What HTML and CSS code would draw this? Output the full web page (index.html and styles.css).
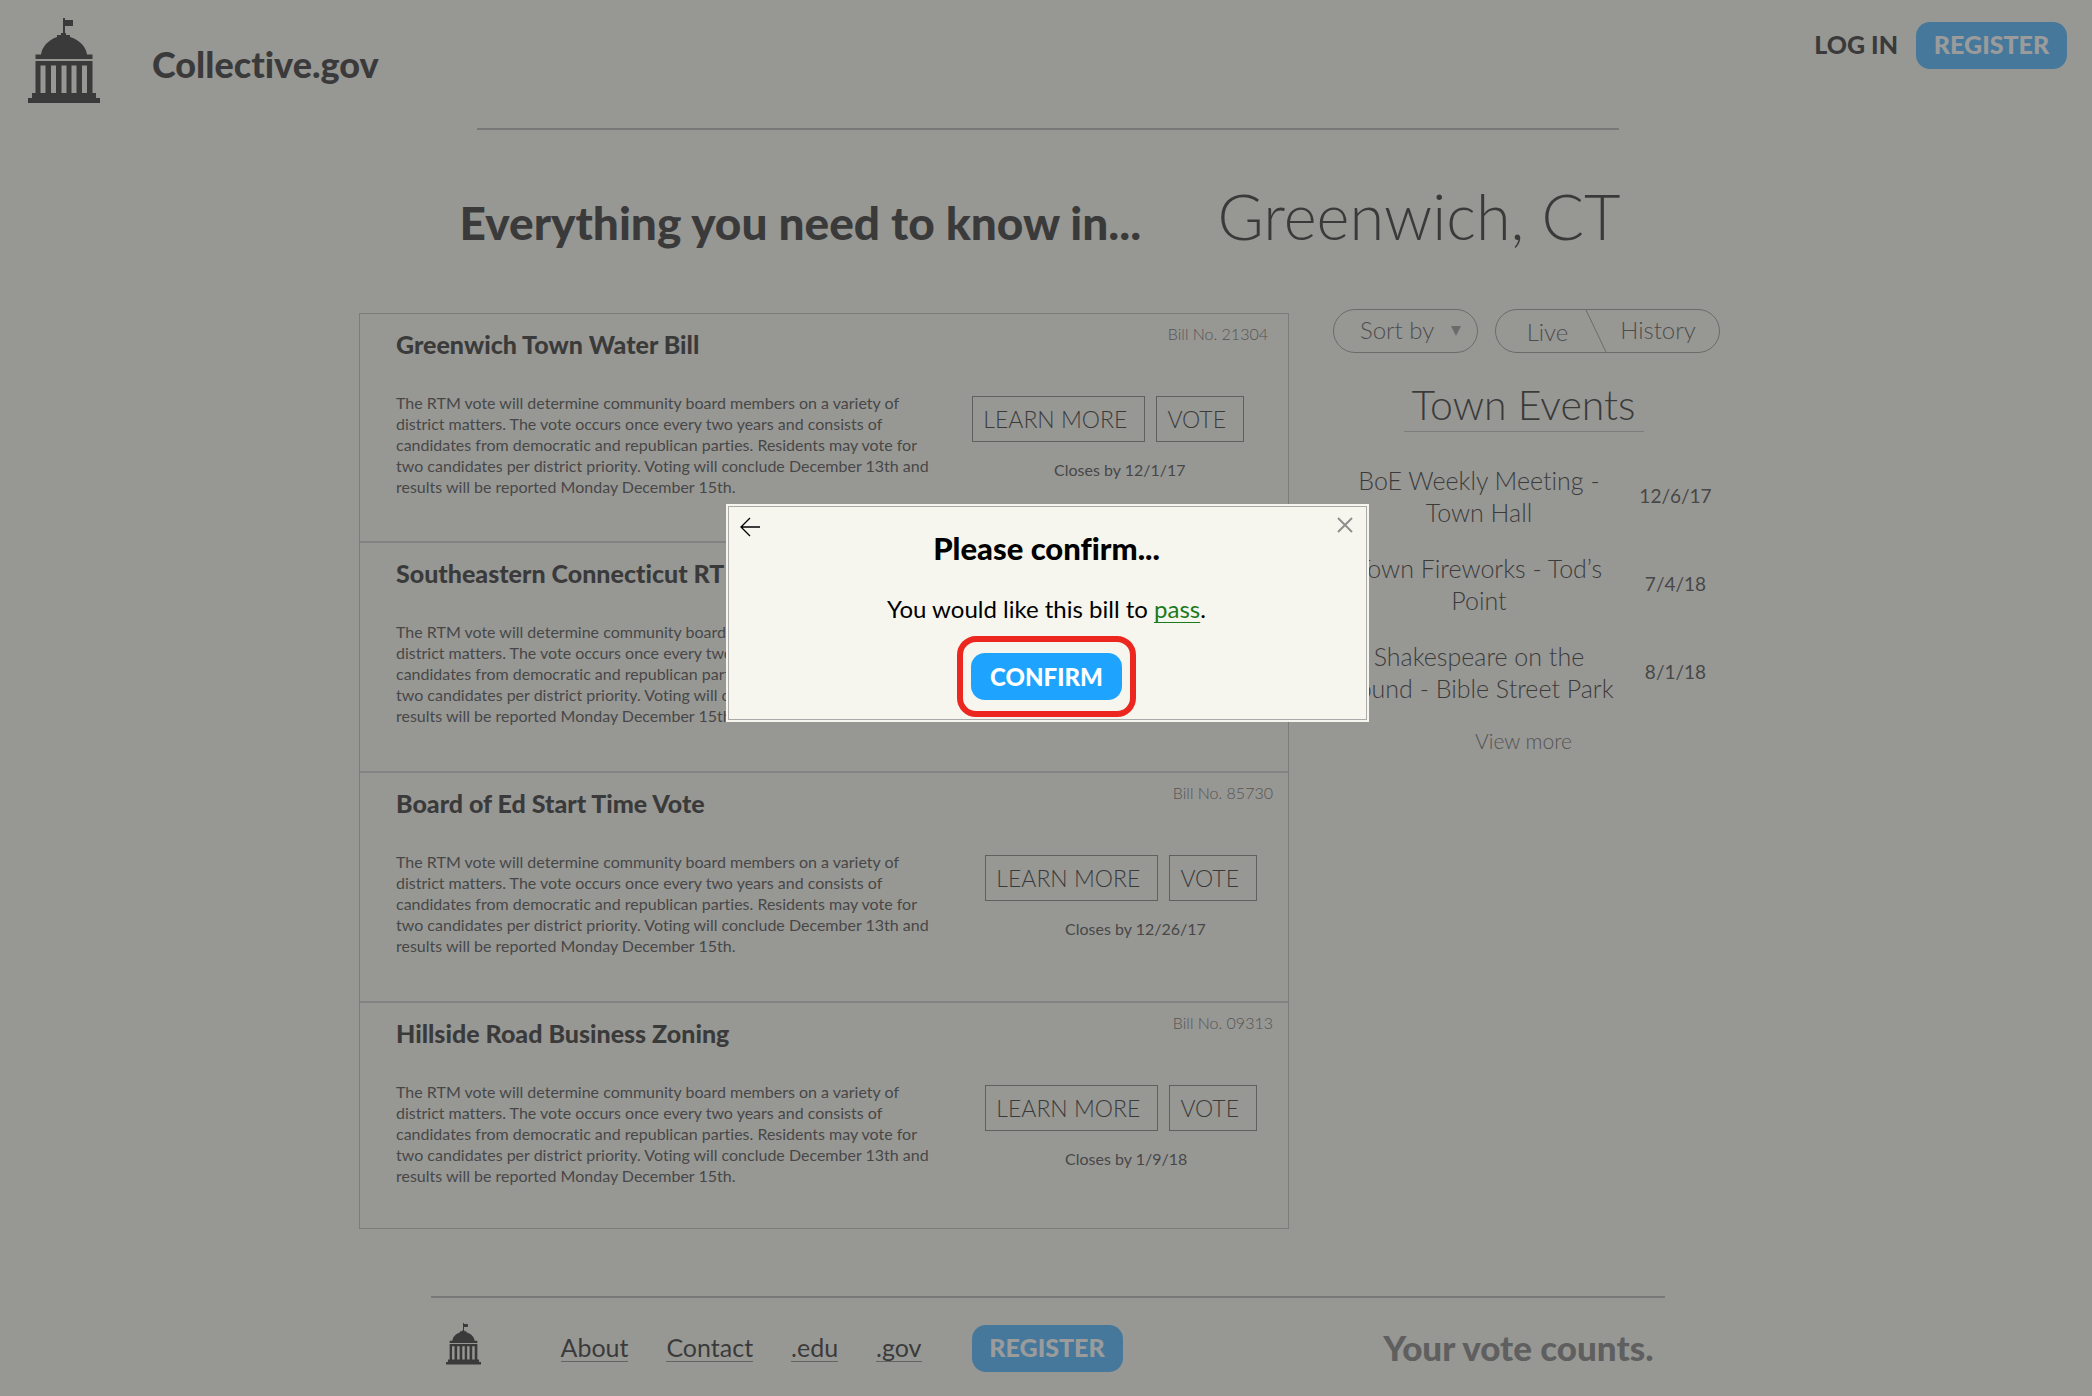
FILE: index.html
```html
<!DOCTYPE html>
<html lang="en">
<head>
<meta charset="utf-8">
<meta name="viewport" content="width=device-width, initial-scale=1">
<title>Collective.gov</title>
<link rel="stylesheet" href="styles.css">
</head>
<body>
<svg class="sprite" width="0" height="0" aria-hidden="true">
  <symbol id="capitol" viewBox="0 0 72 86">
    <path d="M35 0h2v2h8v6h-8v7h1v2h4v2C52 22 58 29 59 36.500h5.500V41h-57v-4.500H13C14 29 20 22 29 19v-2h4v-2h2z"/>
    <path d="M7.500 43h57v32H68v5h4v5H0v-5h4v-5h3.500zM12.500 47.500V75h5V47.500zM23 47.500V75h5V47.500zM33.500 47.500V75h5V47.500zM43.500 47.500V75h5V47.500zM54 47.500V75h5V47.500z" fill-rule="evenodd"/>
  </symbol>
</svg>

<div class="page">
  <header class="top">
    <svg class="top-logo" aria-hidden="true"><use href="#capitol"/></svg>
    <a class="brand" href="#">Collective.gov</a>
    <nav class="account">
      <a class="login" href="#">LOG IN</a>
      <button class="pill-blue" type="button">REGISTER</button>
    </nav>
  </header>
  <hr class="rule rule-top">

  <div class="headline">
    <h1>Everything you need to know in...</h1>
    <p class="place">Greenwich, CT</p>
  </div>

  <main class="content">
    <section class="bills">
      <article class="bill bill-first">
        <div class="bill-text">
          <h2>Greenwich Town Water Bill</h2>
          <p>The RTM vote will determine community board members on a variety of<br>district matters. The vote occurs once every two years and consists of<br>candidates from democratic and republican parties. Residents may vote for<br>two candidates per district priority. Voting will conclude December 13th and<br>results will be reported Monday December 15th.</p>
        </div>
        <div class="bill-side">
          <span class="number">Bill No. 21304</span>
          <div class="actions"><button type="button">LEARN MORE</button><button type="button">VOTE</button></div>
          <span class="closes">Closes by 12/1/17</span>
        </div>
      </article>
      <article class="bill">
        <div class="bill-text">
          <h2>Southeastern Connecticut RTM</h2>
          <p>The RTM vote will determine community board members on a variety of<br>district matters. The vote occurs once every two years and consists of<br>candidates from democratic and republican parties. Residents may vote for<br>two candidates per district priority. Voting will conclude December 13th and<br>results will be reported Monday December 15th.</p>
        </div>
      </article>
      <article class="bill">
        <div class="bill-text">
          <h2>Board of Ed Start Time Vote</h2>
          <p>The RTM vote will determine community board members on a variety of<br>district matters. The vote occurs once every two years and consists of<br>candidates from democratic and republican parties. Residents may vote for<br>two candidates per district priority. Voting will conclude December 13th and<br>results will be reported Monday December 15th.</p>
        </div>
        <div class="bill-side">
          <span class="number">Bill No. 85730</span>
          <div class="actions"><button type="button">LEARN MORE</button><button type="button">VOTE</button></div>
          <span class="closes">Closes by 12/26/17</span>
        </div>
      </article>
      <article class="bill">
        <div class="bill-text">
          <h2>Hillside Road Business Zoning</h2>
          <p>The RTM vote will determine community board members on a variety of<br>district matters. The vote occurs once every two years and consists of<br>candidates from democratic and republican parties. Residents may vote for<br>two candidates per district priority. Voting will conclude December 13th and<br>results will be reported Monday December 15th.</p>
        </div>
        <div class="bill-side">
          <span class="number">Bill No. 09313</span>
          <div class="actions"><button type="button">LEARN MORE</button><button type="button">VOTE</button></div>
          <span class="closes">Closes by 1/9/18</span>
        </div>
      </article>
    </section>

    <aside class="side">
      <div class="filters">
        <div class="sort">
          <select aria-label="Sort by"><option>Sort by</option></select>
          <svg width="10" height="10" viewBox="0 0 10 10" aria-hidden="true"><path d="M0 0h10L5 10z"/></svg>
        </div>
        <div class="toggle">
          <button type="button">Live</button>
          <svg width="22" height="42" viewBox="0 0 22 42" aria-hidden="true"><path d="M1 0l20 42"/></svg>
          <button type="button">History</button>
        </div>
      </div>
      <h2 class="events-title">Town Events</h2>
      <ul class="events">
        <li><span class="event">BoE Weekly Meeting -<br>Town Hall</span><time>12/6/17</time></li>
        <li><span class="event">Town Fireworks - Tod’s<br>Point</span><time>7/4/18</time></li>
        <li><span class="event">Shakespeare on the<br>Sound - Bible Street Park</span><time>8/1/18</time></li>
      </ul>
      <a class="more" href="#">View more</a>
    </aside>
  </main>

  <footer class="bottom">
    <svg class="bottom-logo" aria-hidden="true"><use href="#capitol"/></svg>
    <nav class="links">
      <a href="#">About</a>
      <a href="#">Contact</a>
      <a href="#">.edu</a>
      <a href="#">.gov</a>
    </nav>
    <button class="pill-blue" type="button">REGISTER</button>
    <p class="motto">Your vote counts.</p>
  </footer>
</div>

<div class="overlay">
  <div class="modal" role="dialog" aria-modal="true" aria-labelledby="confirm-title">
    <div class="modal-inner">
      <button class="icon-button back" type="button" aria-label="Back">
        <svg width="20" height="20" viewBox="0 0 20 20"><path d="M20 10H1M10 1L1 10l9 9"/></svg>
      </button>
      <div class="modal-body">
        <h2 id="confirm-title">Please confirm...</h2>
        <p>You would like this bill to <a href="#">pass</a>.</p>
        <div class="ring"><button class="pill-blue" type="button">CONFIRM</button></div>
      </div>
      <button class="icon-button close" type="button" aria-label="Close">
        <svg width="16" height="16" viewBox="0 0 16 16"><path d="M1 1l14 14M15 1L1 15"/></svg>
      </button>
    </div>
  </div>
</div>
</body>
</html>
```
FILE: styles.css
```css
* { box-sizing: border-box; }

body {
  margin: 0;
  background: #f5f5ed;
  color: #000;
  font-family: Lato, "Open Sans", sans-serif;
  font-size: 24px;
  line-height: 32px;
  font-variant-ligatures: none;
}

h1, h2, p, ul { margin: 0; padding: 0; }
a { color: inherit; text-decoration: none; }
button, select { font: inherit; color: inherit; background: none; border: 0; padding: 0; }
.sprite { position: absolute; }

.page {
  display: flex;
  flex-direction: column;
  padding-left: 3px;
}

.pill-blue {
  width: 151px;
  height: 47px;
  border-radius: 14px;
  background: #1ea4ff;
  color: #fff;
  font-size: 25px;
  font-weight: 900;
  padding-bottom: 4px;
}

/* Header */
.top {
  display: flex;
  align-items: flex-start;
  height: 128px;
  padding: 18px 25px 0;
}
.top-logo { width: 72px; height: 86px; }
.brand {
  margin: 26px 0 0 52px;
  font-size: 36px;
  line-height: 40px;
  font-weight: 900;
}
.account {
  display: flex;
  align-items: center;
  gap: 18px;
  margin-left: auto;
  padding-top: 4px;
}
.login { font-size: 25px; font-weight: 900; padding-bottom: 4px; }

.rule { width: 100%; height: 2px; margin: 0 auto; border: 0; background: #a3a3a3; }
.rule-top { max-width: 1142px; }

/* Headline */
.headline {
  display: flex;
  align-items: baseline;
  justify-content: space-between;
  width: 100%;
  max-width: 1176px;
  margin: 46px auto 0;
  padding-right: 15px;
}
.headline h1 { font-size: 46px; line-height: 80px; font-weight: 900; }
.place { font-size: 63px; line-height: 80px; font-weight: 300; }

/* Main columns */
.content {
  display: grid;
  grid-template-columns: minmax(0, 930fr) minmax(0, 387fr);
  gap: 44px;
  width: 100%;
  max-width: 1377px;
  margin: 46px auto 0;
  padding-right: 16px;
}

.bills { border: 1px solid #adada8; margin-top: 4px; align-self: start; }
.bill {
  display: grid;
  grid-template-columns: minmax(0, 1fr) auto;
  height: 230px;
  padding: 14px 15px 0 36px;
  border-top: 2px solid #c0c0c0;
}
.bill-first { height: 227px; border-top: 0; padding-right: 20px; }
.bill:last-child { height: 227px; }
.bill h2 { font-size: 25px; line-height: 32px; font-weight: 900; }
.bill p { margin-top: 32px; font-size: 16px; line-height: 21px; color: #222; }
.bill-side { display: flex; flex-direction: column; align-items: flex-end; font-size: 16px; }
.number { line-height: 12px; color: #444; font-weight: 300; }
.actions { display: flex; gap: 11px; margin: 56px 16px 0 0; }
.bill-first .actions { margin-right: 24px; }
.actions button {
  height: 46px;
  padding: 0 17px 0 10px;
  border: 1px solid #646464;
  font-size: 23px;
  font-weight: 300;
}
.closes { width: 208px; margin-top: 18px; line-height: 20px; color: #222; }
.bill-first .closes { width: 214px; }

/* Sidebar */
.side { display: flex; flex-direction: column; }
.filters { display: flex; gap: 17px; color: #333; font-weight: 300; }
.sort, .toggle {
  display: flex;
  align-items: center;
  height: 44px;
  border: 1px solid #808080;
  border-radius: 22px;
}
.sort { width: 145px; padding: 0 16px 0 26px; justify-content: space-between; }
.sort select { appearance: none; flex: 1; padding-bottom: 2px; }
.sort svg { fill: #808080; }
.toggle { flex: 1; }
.toggle button { flex: 1; padding-bottom: 2px; }
.toggle button:first-child { flex: 0 0 89px; padding: 1px 0 0 14px; }
.toggle button:last-child { padding-right: 10px; }
.toggle svg { fill: none; stroke: #808080; }

.events-title, .more { align-self: center; margin-right: 6px; }
.events-title {
  width: 240px;
  margin-top: 26px;
  border-bottom: 1px solid #b0b0b0;
  font-size: 41px;
  line-height: 52px;
  font-weight: 300;
  text-align: center;
}
.events { list-style: none; margin: 32px -6px 0 0; }
.events li { display: flex; align-items: center; margin-bottom: 24px; font-size: 25px; font-weight: 300; }
.event { flex: 0 0 292px; text-align: center; }
.events time { flex: 1; font-size: 19px; font-weight: 400; color: #222; text-align: center; }
.more { font-size: 21px; line-height: 26px; font-weight: 300; color: #444; }

/* Footer */
.bottom {
  display: flex;
  align-items: flex-start;
  width: 100%;
  max-width: 1234px;
  margin: 67px auto 0;
  padding: 27px 11px 16px 15px;
  border-top: 2px solid #a3a3a3;
}
.bottom-logo { width: 35px; height: 42px; margin-top: -2px; }
.links { display: flex; width: 361px; justify-content: space-between; margin-left: 80px; }
.links a { margin-top: 8px; border-bottom: 1px solid #707070; font-size: 25px; line-height: 28px; }
.bottom .pill-blue { margin-left: 50px; }
.motto { margin-left: auto; font-size: 35px; line-height: 44px; font-weight: 900; color: #616161; }

/* Confirmation dialog */
.overlay {
  position: fixed;
  inset: 0;
  padding: 504px 0 0 3px;
  background: rgba(94, 94, 94, 0.62);
}
.modal { width: 643px; max-width: 100%; margin: 0 auto; padding: 2px; background: #f6f6ee; }
.modal-inner {
  display: flex;
  justify-content: space-between;
  align-items: flex-start;
  height: 214px;
  border: 1px solid #aaa;
  padding: 10px 13px 0 11px;
}
.icon-button { width: 20px; height: 20px; }
.icon-button svg { display: block; fill: none; }
.back svg { stroke: #000; stroke-width: 1.300; }
.close { height: 16px; padding-left: 4px; }
.close svg { stroke: #8f8f8f; stroke-width: 2; }
.modal-body { display: flex; flex-direction: column; align-items: center; }
.modal-body h2 { margin-top: 13px; font-size: 31px; line-height: 36px; font-weight: 900; }
.modal-body p { margin-top: 27px; }
.modal-body a { color: #1b7a1b; text-decoration: underline; text-decoration-thickness: 1px; text-underline-offset: 4px; }
.ring { margin-top: 11px; padding: 11px 8px; border: 6px solid #ec2720; border-radius: 19px; line-height: 0; }
.ring .pill-blue { font-size: 24px; padding-bottom: 0; }
```
